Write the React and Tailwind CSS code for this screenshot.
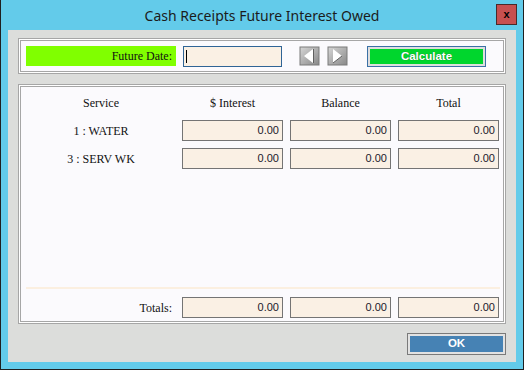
const serif = "font-['Liberation_Serif','Times_New_Roman',serif]";
const sans = "font-['Liberation_Sans',Arial,sans-serif]";

function ArrowButton({ dir }) {
  const pts = dir === 'left' ? '14,3 14,17 5,10' : '6,3 6,17 15,10';
  const edge = dir === 'left' ? 'M14.5 3 L14.5 17' : 'M6 17 L15 10';
  return (
    <svg width="21" height="20" viewBox="0 0 21 20" className="block">
      <defs>
        <linearGradient id={`g-${dir}`} x1="0" y1="0" x2="1" y2="1">
          <stop offset="0" stopColor="#d4d4d4" />
          <stop offset="1" stopColor="#8a8a8a" />
        </linearGradient>
      </defs>
      <rect x="0.5" y="0.5" width="20" height="19" fill="#7a7a7a" />
      <rect x="1.5" y="1.5" width="18" height="17" fill={`url(#g-${dir})`} />
      <polygon points={pts} fill="#ffffff" />
      <path d={edge} stroke="#5f5f5f" strokeWidth="1" fill="none" />
    </svg>
  );
}

function Field({ value = '0.00' }) {
  return (
    <div
      className={`h-[21px] w-[101px] border border-[#747474] bg-[#faf0e4] pr-[3px] text-right text-[11px] leading-[19px] text-[#1a1a2a] ${sans}`}
    >
      {value}
    </div>
  );
}

function Panel({ className, children }) {
  return (
    <div className={`border border-[#a6a6a6] bg-white p-px ${className}`}>
      <div className="h-full border border-[#a6a6a6] bg-[#fbfafd]">{children}</div>
    </div>
  );
}

const rows = [
  { service: '1 : WATER', interest: '0.00', balance: '0.00', total: '0.00' },
  { service: '3 : SERV WK', interest: '0.00', balance: '0.00', total: '0.00' },
];

export default function App() {
  return (
    <div className="flex h-[370px] w-[524px] flex-col border-x border-b border-[#1f1f1f] bg-[#63cbea]">
      <div className="relative flex h-[30px] shrink-0 items-center justify-center">
        <span className="text-[14px] text-[#1b1b1b] font-['Noto_Sans','Open_Sans',sans-serif]">
          Cash Receipts Future Interest Owed
        </span>
        <div className="absolute right-[6px] top-[4px] flex h-[21px] w-[21px] items-center justify-center border border-[#4a2a2a] bg-[#c75050]">
          <span className={`text-[11px] font-bold leading-none text-black ${sans}`}>x</span>
        </div>
      </div>

      <div className="mx-[7px] flex flex-1 flex-col bg-[#dcdddb] px-[10px] pt-[8px]">
        <Panel className="h-[36px]">
          <div className="flex items-start pl-[5px] pt-[5px]">
            <div
              className={`h-[20px] w-[150px] bg-[#80ff00] pr-[4px] text-right text-[12px] leading-[20px] text-[#111] ${serif}`}
            >
              Future Date:
            </div>
            <div className="ml-[7px] flex h-[21px] w-[99px] items-center border border-[#2f6496] bg-[#faf0e4] pl-[2px]">
              <div className="h-[13px] w-px bg-black" />
            </div>
            <div className="ml-[17px]">
              <ArrowButton dir="left" />
            </div>
            <div className="ml-[7px]">
              <ArrowButton dir="right" />
            </div>
            <div className="ml-[19px] h-[21px] w-[119px] border border-[#3a70a6] bg-[#dedede] p-[2px]">
              <div
                className={`flex h-full items-center justify-center bg-[#00d62d] text-[11.5px] font-bold text-white [text-shadow:0_0_1px_#2a6a2a] ${sans}`}
              >
                Calculate
              </div>
            </div>
          </div>
        </Panel>

        <Panel className="mt-[10px] h-[240px]">
          <div className="flex h-full flex-col pb-[3px] pl-[5px] pt-[8px]">
            <div className={`flex h-[16px] items-center text-[12px] text-[#111] ${serif}`}>
              <div className="w-[150px] text-center">Service</div>
              <div className="ml-[6px] w-[101px] text-center">$ Interest</div>
              <div className="ml-[7px] w-[101px] text-center">Balance</div>
              <div className="ml-[7px] w-[101px] text-center">Total</div>
            </div>
            <div className="mt-[9px] flex flex-col gap-[7px]">
              {rows.map((r) => (
                <div key={r.service} className="flex items-center">
                  <div className={`w-[150px] text-center text-[12px] text-[#111] ${serif}`}>
                    {r.service}
                  </div>
                  <div className="ml-[6px] flex gap-[7px]">
                    <Field value={r.interest} />
                    <Field value={r.balance} />
                    <Field value={r.total} />
                  </div>
                </div>
              ))}
            </div>
            <div className="flex-1" />
            <div className="mr-[3px] h-[2px] bg-[#fbefe0]" />
            <div className="mt-[8px] flex items-center">
              <div className={`w-[150px] pr-[4px] text-right text-[12px] text-[#111] ${serif}`}>
                Totals:
              </div>
              <div className="ml-[6px] flex gap-[7px]">
                <Field />
                <Field />
                <Field />
              </div>
            </div>
          </div>
        </Panel>

        <div className="mt-[9px] flex justify-end">
          <div className="h-[22px] w-[99px] border border-[#7a7a7a] bg-[#e2e2e2] p-[2px]">
            <div
              className={`flex h-full items-center justify-center bg-[#4682b4] text-[11.5px] font-bold text-white ${sans}`}
            >
              OK
            </div>
          </div>
        </div>
      </div>
      <div className="h-[7px] shrink-0" />
    </div>
  );
}
